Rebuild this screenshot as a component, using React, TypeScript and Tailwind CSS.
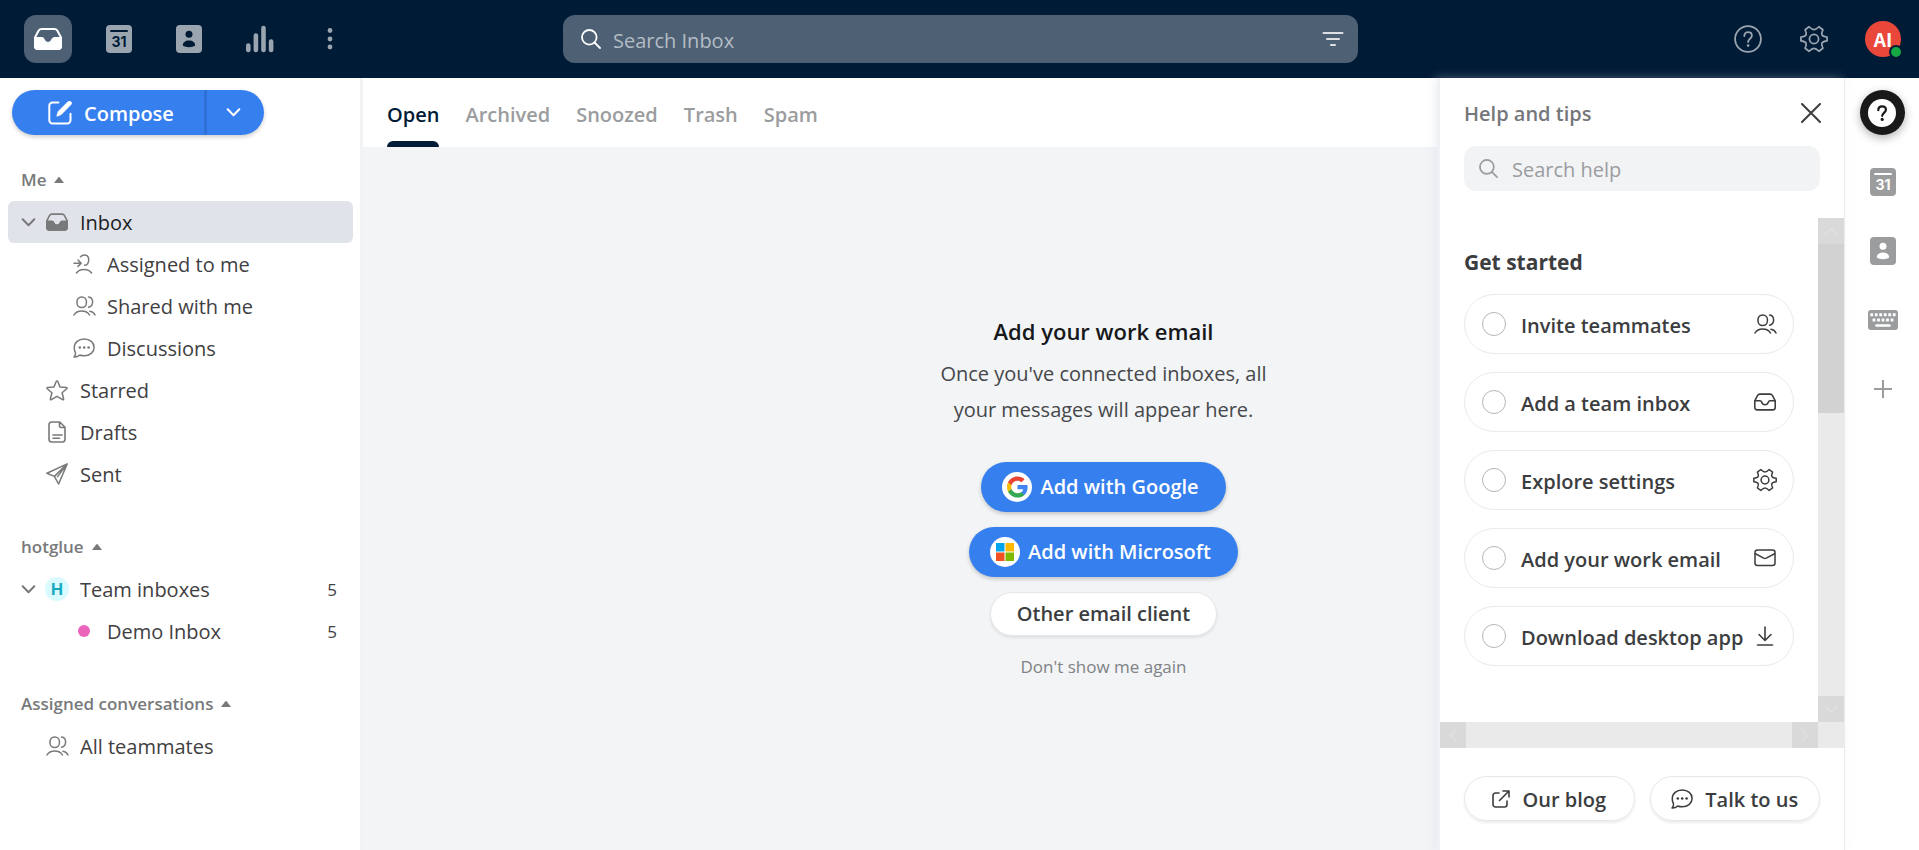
import type { ReactNode } from 'react';

type IconProps = { className?: string };

const InboxIcon = ({ className, filled }: IconProps & { filled?: boolean }) => (
  <svg viewBox="0 0 28 22" fill="none" stroke="currentColor" strokeWidth="2" strokeLinejoin="round" className={className}>
    <path d="M7.5 1h13c1.5 0 2.5.7 3.1 2L27 9.5V18a3 3 0 0 1-3 3H4a3 3 0 0 1-3-3V9.5L4.4 3C5 1.7 6 1 7.5 1z" />
    {filled ? (
      <path
        fill="currentColor"
        d="M1 10h6.5c1.300 0 1.900.6 2.300 1.800a4.400 4.400 0 0 0 8.400 0c.4-1.200 1-1.800 2.300-1.800H27v8a3 3 0 0 1-3 3H4a3 3 0 0 1-3-3z"
      />
    ) : (
      <path d="M1 9.5h6.5c1.300 0 1.900.6 2.300 1.800a4.400 4.400 0 0 0 8.400 0c.4-1.200 1-1.800 2.300-1.800H27" />
    )}
  </svg>
);

const CalendarIcon = ({ className, cut }: IconProps & { cut: string }) => (
  <svg viewBox="0 0 26 28" className={className}>
    <rect width="26" height="28" rx="4" fill="currentColor" />
    <path d="M5 6h16" stroke={cut} strokeWidth="2" strokeLinecap="round" />
    <text x="13" y="22" textAnchor="middle" fontFamily="Inter, sans-serif" fontWeight="700" fontSize="14" fill={cut}>
      31
    </text>
  </svg>
);

const ContactIcon = ({ className, cut }: IconProps & { cut: string }) => (
  <svg viewBox="0 0 26 28" className={className}>
    <rect width="26" height="28" rx="4" fill="currentColor" />
    <circle cx="13" cy="9.3" r="3.5" fill={cut} />
    <path d="M6.800 20.500c0-3 2.400-5 6.200-5s6.200 2 6.200 5c-1.600 1.300-3.700 1.700-6.200 1.700s-4.600-.4-6.200-1.700z" fill={cut} />
  </svg>
);

const BarsIcon = ({ className }: IconProps) => (
  <svg viewBox="0 0 28 28" stroke="currentColor" strokeWidth="4.6" strokeLinecap="round" className={className}>
    <path d="M2.300 20.500v4.500M9.900 10.500V25M17.500 3v22M25.100 16.500V25" />
  </svg>
);

const MoreIcon = ({ className }: IconProps) => (
  <svg viewBox="0 0 6 24" fill="currentColor" className={className}>
    <circle cx="3" cy="3.5" r="2.4" />
    <circle cx="3" cy="12" r="2.4" />
    <circle cx="3" cy="20" r="2.4" />
  </svg>
);

const SearchIcon = ({ className }: IconProps) => (
  <svg viewBox="0 0 20 20" fill="none" stroke="currentColor" strokeWidth="1.8" strokeLinecap="round" className={className}>
    <circle cx="8.3" cy="8.3" r="7.3" />
    <path d="M13.500 13.500L19 19" />
  </svg>
);

const FilterIcon = ({ className }: IconProps) => (
  <svg viewBox="0 0 22 16" stroke="currentColor" strokeWidth="2" strokeLinecap="round" className={className}>
    <path d="M1.500 2h19M5 8h12M9 14h4" />
  </svg>
);

const HelpIcon = ({ className }: IconProps) => (
  <svg viewBox="0 0 28 28" fill="none" stroke="currentColor" strokeWidth="1.8" strokeLinecap="round" className={className}>
    <circle cx="14" cy="14" r="12.900" />
    <path d="M10.300 11c0-2.400 1.600-3.900 3.800-3.900s3.800 1.400 3.800 3.500c0 3-3.800 3.300-3.800 6.400" />
    <circle cx="14.100" cy="20.600" r="1.300" fill="currentColor" stroke="none" />
  </svg>
);

const GearIcon = ({ className }: IconProps) => (
  <svg viewBox="0 0 24 24" fill="none" stroke="currentColor" strokeWidth="1.5" strokeLinejoin="round" className={className}>
    <path d="M23.200 10.300V13.700C20.500 14 19.300 14.500 18.800 15.600C18.300 16.700 18.500 17.500 19.600 19.900L16.200 22.500C14.400 20.700 13.400 20.100 12 20.100C10.600 20.100 9.600 20.700 7.800 22.500L4.400 19.900C5.500 17.500 5.700 16.700 5.200 15.600C4.700 14.500 3.500 14 .8 13.700V10.300C3.500 10 4.700 9.500 5.200 8.400C5.700 7.300 5.500 6.500 4.400 4.100L7.800 1.500C9.600 3.300 10.600 3.900 12 3.900C13.400 3.900 14.400 3.300 16.200 1.500L19.600 4.100C18.500 6.500 18.300 7.300 18.800 8.400C19.300 9.500 20.500 10 23.200 10.300z" />
    <circle cx="12" cy="12" r="3.900" />
  </svg>
);

const ComposeIcon = ({ className }: IconProps) => (
  <svg viewBox="0 0 24 24" fill="none" stroke="currentColor" strokeWidth="2" strokeLinecap="round" className={className}>
    <path d="M10.500 1.500H4.500a3.200 3.200 0 0 0-3.200 3.200v14.600a3.200 3.200 0 0 0 3.200 3.200h14.800a3.200 3.200 0 0 0 3.200-3.200v-6.500" />
    <path d="M9 14.800l1.300-4.300L20.200.6q1.400-1 2.600.2t.2 2.600L13.200 13.400z" fill="currentColor" strokeWidth="1" strokeLinejoin="round" />
  </svg>
);

const ChevronIcon = ({ className }: IconProps) => (
  <svg viewBox="0 0 14 9" fill="none" stroke="currentColor" strokeWidth="2" strokeLinecap="round" strokeLinejoin="round" className={className}>
    <path d="M1.200 1.200L7 7.200l5.800-6" />
  </svg>
);

const CaretUp = () => (
  <svg viewBox="0 0 10 6" fill="currentColor" className="h-1.5 w-2.5">
    <path d="M0 6l4.200-5.500q.8-.8 1.600 0L10 6z" />
  </svg>
);

const AssignIcon = ({ className }: IconProps) => (
  <svg viewBox="0 0 22 20" fill="none" stroke="currentColor" strokeWidth="1.5" strokeLinecap="round" strokeLinejoin="round" className={className}>
    <path d="M1 9.200h7.200M5 6l3.200 3.200L5 12.400M7.500 2.800C8.300 1.600 9.800.9 11.500.9c2.600 0 4.200 1.900 4.200 4.800 0 3-1.500 5.300-4 5.600M3.500 19c1.500-2.400 4-3.600 7.500-3.600s6 1.200 7.500 3.600" />
  </svg>
);

const UsersIcon = ({ className }: IconProps) => (
  <svg viewBox="0 0 23 20" fill="none" stroke="currentColor" strokeWidth="1.5" strokeLinecap="round" strokeLinejoin="round" className={className}>
    <rect x="4" y=".9" width="9.400" height="10.600" rx="4.500" />
    <path d="M15.600 1c2.500.3 4 2.200 4 5s-1.500 4.800-4 5.300M1 19c1.500-2.600 4.300-4 7.700-4s6.300 1.400 7.800 4M17 15.300c2.300.4 3.900 1.600 5 3.700" />
  </svg>
);

const ChatIcon = ({ className }: IconProps) => (
  <svg viewBox="0 0 22 20" fill="none" stroke="currentColor" strokeWidth="1.5" strokeLinejoin="round" className={className}>
    <path d="M1 19c1.300-1.200 1.800-2.600 1.400-4.600A8.300 8.300 0 0 1 1.300 9.700C1.300 4.600 5.500 1 11.200 1s9.900 3.600 9.900 8.400-4.200 8.400-9.900 8.400c-1.700 0-3.200-.3-4.400-.8C5.200 18.500 3.300 19.200 1 19z" />
    <g fill="currentColor" stroke="none">
      <circle cx="6.800" cy="9.500" r="1.300" />
      <circle cx="11.200" cy="9.500" r="1.300" />
      <circle cx="15.600" cy="9.500" r="1.300" />
    </g>
  </svg>
);

const StarIcon = ({ className }: IconProps) => (
  <svg viewBox="0 0 22 21" fill="none" stroke="currentColor" strokeWidth="1.5" strokeLinejoin="round" className={className}>
    <path d="M11 .9q.6 0 .8.6l2.300 5.600 6.200.5q1.300.3.400 1.200l-4.600 4 1.500 6q.1 1.300-1 .9L11 16.400l-5.600 3.300q-1.100.4-1-.9l1.500-6-4.600-4q-.9-.9.4-1.200l6.200-.5 2.300-5.600q.2-.6.8-.6z" />
  </svg>
);

const DraftIcon = ({ className }: IconProps) => (
  <svg viewBox="0 0 18 22" fill="none" stroke="currentColor" strokeWidth="1.6" strokeLinecap="round" strokeLinejoin="round" className={className}>
    <path d="M3.800 1h8L17 6.300v11.900A2.800 2.800 0 0 1 14.200 21H3.800A2.800 2.800 0 0 1 1 18.200V3.800A2.800 2.800 0 0 1 3.800 1zM11.500 1.200v3.600q0 1.700 1.700 1.700h3.600M5 14h9M5 17.300h6.500" />
  </svg>
);

const SendIcon = ({ className }: IconProps) => (
  <svg viewBox="0 0 22 22" fill="none" stroke="currentColor" strokeWidth="1.5" strokeLinejoin="round" className={className}>
    <path d="M21.200.9L.9 10.200l7.500 3.200L12.600 21zM21.200.9L8.400 13.400M21.200.9l-10 13.200" />
  </svg>
);

const MailIcon = ({ className }: IconProps) => (
  <svg viewBox="0 0 22 18" fill="none" stroke="currentColor" strokeWidth="1.5" strokeLinejoin="round" className={className}>
    <rect x="1" y="1" width="20" height="15.500" rx="2.500" />
    <path d="M1 4.500l8.700 4.600q1.300.6 2.600 0L21 4.500" />
  </svg>
);

const DownloadIcon = ({ className }: IconProps) => (
  <svg viewBox="0 0 18 20" fill="none" stroke="currentColor" strokeWidth="1.6" strokeLinecap="round" strokeLinejoin="round" className={className}>
    <path d="M9 1v13M3 8.500l6 6 6-6M1.500 19h15" />
  </svg>
);

const ExternalIcon = ({ className }: IconProps) => (
  <svg viewBox="0 0 18 18" fill="none" stroke="currentColor" strokeWidth="1.6" strokeLinecap="round" strokeLinejoin="round" className={className}>
    <path d="M7 3H3.500A2.500 2.500 0 0 0 1 5.500v9A2.500 2.500 0 0 0 3.500 17h9a2.500 2.500 0 0 0 2.500-2.500V11M11 1h6v6M17 1L7.500 10.500" />
  </svg>
);

const CloseIcon = ({ className }: IconProps) => (
  <svg viewBox="0 0 20 20" stroke="currentColor" strokeWidth="2" strokeLinecap="round" className={className}>
    <path d="M1 1l18 18M19 1L1 19" />
  </svg>
);

const KeyboardIcon = ({ className }: IconProps) => (
  <svg viewBox="0 0 30 20" className={className}>
    <rect width="30" height="20" rx="3" fill="currentColor" />
    <path d="M2.300 4.800h26" stroke="#fff" strokeWidth="3" strokeDasharray="2.800 1.700" />
    <path d="M4.600 10h22" stroke="#fff" strokeWidth="3" strokeDasharray="2.800 1.700" />
    <path d="M8.500 15.500h13" stroke="#fff" strokeWidth="2.6" strokeLinecap="round" />
  </svg>
);

const GoogleIcon = () => (
  <svg viewBox="0 0 30 30" className="size-[30px]">
    <circle cx="15" cy="15" r="15" fill="#fff" />
    <g transform="translate(4 3.500) scale(.958)">
      <path fill="#4285F4" d="M22.560 12.250c0-.78-.07-1.530-.2-2.250H12v4.260h5.920c-.26 1.370-1.040 2.530-2.210 3.310v2.770h3.570c2.080-1.920 3.280-4.740 3.280-8.090z" />
      <path fill="#34A853" d="M12 23c2.970 0 5.460-.98 7.280-2.660l-3.570-2.770c-.98.66-2.230 1.060-3.710 1.060-2.860 0-5.290-1.930-6.160-4.530H2.180v2.840C3.990 20.530 7.700 23 12 23z" />
      <path fill="#FBBC05" d="M5.840 14.090c-.22-.66-.35-1.360-.35-2.090s.13-1.430.35-2.090V7.070H2.180C1.430 8.550 1 10.220 1 12s.43 3.450 1.180 4.930l3.660-2.840z" />
      <path fill="#EA4335" d="M12 5.380c1.620 0 3.060.56 4.210 1.640l3.150-3.150C17.450 2.090 14.970 1 12 1 7.700 1 3.990 3.470 2.180 7.070l3.660 2.840c.87-2.600 3.300-4.530 6.160-4.530z" />
    </g>
  </svg>
);

const MicrosoftIcon = () => (
  <svg viewBox="0 0 30 30" className="size-[30px]">
    <circle cx="15" cy="15" r="15" fill="#fff" />
    <path fill="#00A4EF" d="M6 6h8.500v8.500H6z" />
    <path fill="#FFB900" d="M15.500 6H24v8.500h-8.500z" />
    <path fill="#F25022" d="M6 15.500h8.500V24H6z" />
    <path fill="#7FBA00" d="M15.500 15.500H24V24h-8.500z" />
  </svg>
);

const TABS = ['Open', 'Archived', 'Snoozed', 'Trash', 'Spam'];

const STEPS = [
  { label: 'Invite teammates', icon: <UsersIcon className="h-5 w-[23px]" /> },
  { label: 'Add a team inbox', icon: <InboxIcon className="h-[18px] w-[22px]" /> },
  { label: 'Explore settings', icon: <GearIcon className="size-6" /> },
  { label: 'Add your work email', icon: <MailIcon className="h-[18px] w-[22px]" /> },
  { label: 'Download desktop app', icon: <DownloadIcon className="h-5 w-[18px]" /> },
];

function NavSection({ title, children }: { title: string; children: ReactNode }) {
  return (
    <section>
      <button className="flex h-[42px] items-center gap-2 pl-[13px] text-[17px] font-semibold text-[#77797b]">
        {title}
        <CaretUp />
      </button>
      <ul>{children}</ul>
    </section>
  );
}

type NavItemProps = {
  label: string;
  icon: ReactNode;
  count?: number;
  nested?: boolean;
  expandable?: boolean;
  active?: boolean;
};

function NavItem({ label, icon, count, nested, expandable, active }: NavItemProps) {
  return (
    <li>
      <a
        href="#"
        className={`flex h-[42px] items-center rounded-md pr-4 text-[20px] ${nested ? 'pl-16' : 'pl-[13px]'} ${
          active ? 'bg-[#e1e3ea] text-[#1c1d1f]' : 'text-[#3f4042]'
        }`}
      >
        {!nested && (
          <span className="w-6 text-[#77797b]">{expandable && <ChevronIcon className="h-[9px] w-[15px]" />}</span>
        )}
        <span className="flex w-6 justify-center text-[#77797b]">{icon}</span>
        <span className="flex-1 pt-0.5 pl-[11px]">{label}</span>
        {count && <span className="pt-0.5 text-[17px]">{count}</span>}
      </a>
    </li>
  );
}

function Header() {
  return (
    <header className="flex h-[78px] shrink-0 items-center bg-[#001b36] text-[#9aa5b0]">
      <nav className="flex flex-1 items-center pl-6">
        <button aria-label="Inbox" className="flex size-12 items-center justify-center rounded-xl bg-[#4e6074] text-white">
          <InboxIcon filled className="h-[22px] w-7" />
        </button>
        <button aria-label="Calendar" className="ml-[34px]">
          <CalendarIcon cut="#001b36" className="h-7 w-[26px]" />
        </button>
        <button aria-label="Contacts" className="ml-11">
          <ContactIcon cut="#001b36" className="h-7 w-[26px]" />
        </button>
        <button aria-label="Analytics" className="ml-11">
          <BarsIcon className="size-7" />
        </button>
        <button aria-label="More" className="ml-[53px]">
          <MoreIcon className="h-6 w-1.5" />
        </button>
      </nav>
      <div className="flex h-12 w-[795px] items-center rounded-xl bg-[#4e6074] pr-3.5 pl-[18px]">
        <SearchIcon className="size-5 text-white" />
        <input
          type="text"
          aria-label="Search Inbox"
          placeholder="Search Inbox"
          className="h-full flex-1 bg-transparent pt-0.5 pl-3 text-[20px] text-white outline-none placeholder:text-[#b3bcc5]"
        />
        <button aria-label="Filter" className="text-white/80">
          <FilterIcon className="h-4 w-[22px]" />
        </button>
      </div>
      <div className="flex flex-1 items-center justify-end pr-[18px] pl-1">
        <button aria-label="Help">
          <HelpIcon className="size-7" />
        </button>
        <button aria-label="Settings" className="mr-[37px] ml-[38px]">
          <GearIcon className="size-7" />
        </button>
        <button className="relative flex size-9 items-center justify-center rounded-full bg-[#ea473b] font-['Noto_Sans_CJK_SC','Liberation_Sans',sans-serif] text-[19px] font-bold text-white">
          AI
          <span className="absolute -right-0.5 -bottom-0.5 size-3.5 rounded-full border-2 border-[#001b36] bg-[#16a843]" />
        </button>
      </div>
    </header>
  );
}

function Sidebar() {
  return (
    <aside className="w-[363px] shrink-0 border-r-3 border-[#f2f3f5] bg-white pt-3">
      <div className="ml-3 flex h-[45px] w-[252px] overflow-hidden rounded-full bg-[#367fee] text-white shadow-[0_2px_4px_rgba(0,0,0,0.2)]">
        <button className="flex w-48 items-center gap-3 pl-9 text-[20px] font-semibold">
          <ComposeIcon className="size-6" />
          <span className="pt-0.5">Compose</span>
        </button>
        <button aria-label="Compose options" className="flex flex-1 items-center border-l-3 border-[#3071d8] pl-[19px]">
          <ChevronIcon className="h-[9px] w-[15px]" />
        </button>
      </div>
      <nav className="mt-6 flex flex-col gap-[31px] pr-[7px] pl-2">
        <NavSection title="Me">
          <NavItem active expandable label="Inbox" icon={<InboxIcon filled className="h-[18px] w-[22px]" />} />
          <NavItem nested label="Assigned to me" icon={<AssignIcon className="h-5 w-[22px]" />} />
          <NavItem nested label="Shared with me" icon={<UsersIcon className="h-5 w-[23px]" />} />
          <NavItem nested label="Discussions" icon={<ChatIcon className="h-5 w-[22px]" />} />
          <NavItem label="Starred" icon={<StarIcon className="h-[21px] w-[22px]" />} />
          <NavItem label="Drafts" icon={<DraftIcon className="h-[22px] w-[18px]" />} />
          <NavItem label="Sent" icon={<SendIcon className="size-[22px]" />} />
        </NavSection>
        <NavSection title="hotglue">
          <NavItem
            expandable
            label="Team inboxes"
            count={5}
            icon={
              <span className="flex size-6 items-center justify-center rounded-full bg-[#d9fafe] font-['Inter',sans-serif] text-[16px] font-bold text-[#17a9bf]">
                H
              </span>
            }
          />
          <NavItem nested label="Demo Inbox" count={5} icon={<span className="size-3 rounded-full bg-[#eb64bb]" />} />
        </NavSection>
        <NavSection title="Assigned conversations">
          <NavItem label="All teammates" icon={<UsersIcon className="h-5 w-[23px]" />} />
        </NavSection>
      </nav>
    </aside>
  );
}

function EmptyState() {
  return (
    <div className="flex flex-1 flex-col items-center justify-center pb-0.5 text-[20px]">
      <h2 className="text-[22px] font-semibold text-[#17181a]">Add your work email</h2>
      <p className="mt-2 w-[350px] text-center leading-9 text-[#46474a]">
        Once you've connected inboxes, all your messages will appear here.
      </p>
      <button className="mt-[34px] flex h-[50px] items-center gap-2 rounded-full bg-[#367fee] pr-[27px] pl-[21px] font-semibold text-white shadow-[0_2px_4px_rgba(0,0,0,0.2)]">
        <GoogleIcon />
        Add with Google
      </button>
      <button className="mt-[15px] flex h-[50px] items-center gap-2 rounded-full bg-[#367fee] pr-[27px] pl-[21px] font-semibold text-white shadow-[0_2px_4px_rgba(0,0,0,0.2)]">
        <MicrosoftIcon />
        Add with Microsoft
      </button>
      <button className="mt-[15px] h-11 rounded-full border border-[#e6e7e9] bg-white px-[26px] font-semibold text-[#3c3d3f] shadow-[0_2px_3px_rgba(0,0,0,0.08)]">
        Other email client
      </button>
      <button className="mt-[18px] text-[17px] text-[#808285]">Don't show me again</button>
    </div>
  );
}

function HelpPanel() {
  return (
    <aside className="absolute inset-y-0 right-0 flex w-[407px] flex-col border-l-3 border-[#f0f1f5] bg-white text-[#3c3d3f] shadow-[-2px_0_10px_rgba(210,214,226,0.35)]">
      <div className="flex items-center justify-between pt-5 pr-[23px] pl-6">
        <h2 className="pt-0.5 text-[20px] leading-7 font-semibold text-[#75777a]">Help and tips</h2>
        <button aria-label="Close">
          <CloseIcon className="size-5" />
        </button>
      </div>
      <div className="mx-6 mt-[18px] flex h-[45px] shrink-0 items-center rounded-xl bg-[#f2f3f5] pl-[15px] text-[#9b9c9e]">
        <SearchIcon className="size-[19px]" />
        <input
          type="text"
          aria-label="Search help"
          placeholder="Search help"
          className="h-full min-w-0 flex-1 bg-transparent pt-0.5 pl-3.5 text-[20px] outline-none placeholder:text-[#9b9c9e]"
        />
      </div>
      <div className="mt-[27px] flex min-h-0 flex-1">
        <div className="flex-1 pt-7 pl-6">
          <h3 className="text-[21px] leading-8 font-bold">Get started</h3>
          <ul className="mt-4 flex w-[330px] flex-col gap-[18px]">
            {STEPS.map((step) => (
              <li key={step.label}>
                <label className="flex h-[60px] items-center rounded-full border border-[#eaeaeb] pr-4 pl-[17px] text-[20px] font-semibold whitespace-nowrap">
                  <input type="checkbox" className="size-6 appearance-none rounded-full border border-[#b4b5b7]" />
                  <span className="flex-1 pt-[3px] pl-[15px]">{step.label}</span>
                  <span className="flex w-6 shrink-0 justify-center">{step.icon}</span>
                </label>
              </li>
            ))}
          </ul>
        </div>
        <div aria-hidden className="flex w-[26px] flex-col bg-[#eaeaea] text-[#dfdfdf]">
          <span className="flex h-[26px] items-center justify-center bg-[#d9d9d9]">
            <ChevronIcon className="h-[9px] w-[14px] rotate-180" />
          </span>
          <span className="h-[169px] bg-[#d2d2d2]" />
          <span className="mt-auto flex h-[26px] items-center justify-center bg-[#d9d9d9]">
            <ChevronIcon className="h-[9px] w-[14px]" />
          </span>
        </div>
      </div>
      <div aria-hidden className="flex h-[26px] shrink-0 justify-between bg-[#eaeaea] pr-[26px] text-[#dfdfdf]">
        <span className="flex w-[26px] items-center justify-center bg-[#d9d9d9]">
          <ChevronIcon className="h-[9px] w-[14px] rotate-90" />
        </span>
        <span className="flex w-[26px] items-center justify-center bg-[#d9d9d9]">
          <ChevronIcon className="h-[9px] w-[14px] -rotate-90" />
        </span>
      </div>
      <div className="flex gap-[15px] px-6 pt-7 pb-[29px] text-[20px] font-semibold">
        <button className="flex h-[45px] flex-1 items-center justify-center gap-3 rounded-full border border-[#e6e7e9] shadow-[0_2px_3px_rgba(0,0,0,0.08)]">
          <ExternalIcon className="size-[18px]" />
          <span className="pt-0.5">Our blog</span>
        </button>
        <button className="flex h-[45px] flex-1 items-center justify-center gap-3 rounded-full border border-[#e6e7e9] shadow-[0_2px_3px_rgba(0,0,0,0.08)]">
          <ChatIcon className="h-5 w-[22px]" />
          <span className="pt-0.5">Talk to us</span>
        </button>
      </div>
    </aside>
  );
}

function Rail() {
  return (
    <aside className="flex w-[75px] shrink-0 flex-col items-center border-l border-[#ededee] bg-white pt-3 text-[#9b9c9e]">
      <button
        aria-label="Help and tips"
        className="flex size-[45px] items-center justify-center rounded-full bg-[#191919] shadow-[0_3px_10px_rgba(0,0,0,0.3)]"
      >
        <svg viewBox="0 0 28 28" fill="none" className="size-7">
          <circle cx="14" cy="14" r="14" fill="#fff" />
          <path d="M10.300 11.200c0-2.500 1.600-3.900 3.800-3.900s3.800 1.400 3.800 3.500c0 2.900-3.700 3.200-3.700 6" stroke="#191919" strokeWidth="2.2" strokeLinecap="round" />
          <circle cx="14.200" cy="20.400" r="1.600" fill="#191919" />
        </svg>
      </button>
      <div className="mt-[33px] flex flex-col items-center pl-0.5">
        <button aria-label="Calendar">
          <CalendarIcon cut="#fff" className="h-7 w-[26px]" />
        </button>
        <button aria-label="Contacts" className="mt-[41px]">
          <ContactIcon cut="#fff" className="h-7 w-[26px]" />
        </button>
        <button aria-label="Keyboard shortcuts" className="mt-[45px]">
          <KeyboardIcon className="h-5 w-[30px]" />
        </button>
        <button aria-label="Add" className="mt-[49px]">
          <svg viewBox="0 0 20 20" stroke="currentColor" strokeWidth="2" className="size-5">
            <path d="M10 1v18M1 10h18" />
          </svg>
        </button>
      </div>
    </aside>
  );
}

export default function App() {
  return (
    <div className="flex h-screen flex-col overflow-hidden font-['Open_Sans','Noto_Sans',sans-serif]">
      <Header />
      <div className="flex min-h-0 flex-1">
        <Sidebar />
        <main className="relative flex flex-1 flex-col bg-[#f2f4f6]">
          <div role="tablist" className="flex h-[69px] shrink-0 gap-[26px] bg-white pl-6 text-[20px] font-semibold">
            {TABS.map((tab, index) => (
              <button
                key={tab}
                role="tab"
                aria-selected={index === 0}
                className={`flex flex-col items-stretch justify-between pt-[21px] ${
                  index === 0 ? 'text-[#001b36]' : 'text-[#9b9c9e]'
                }`}
              >
                <span className="leading-8">{tab}</span>
                {index === 0 && <span className="h-1.5 rounded-t-md bg-[#001b36]" />}
              </button>
            ))}
          </div>
          <EmptyState />
          <HelpPanel />
        </main>
        <Rail />
      </div>
    </div>
  );
}
